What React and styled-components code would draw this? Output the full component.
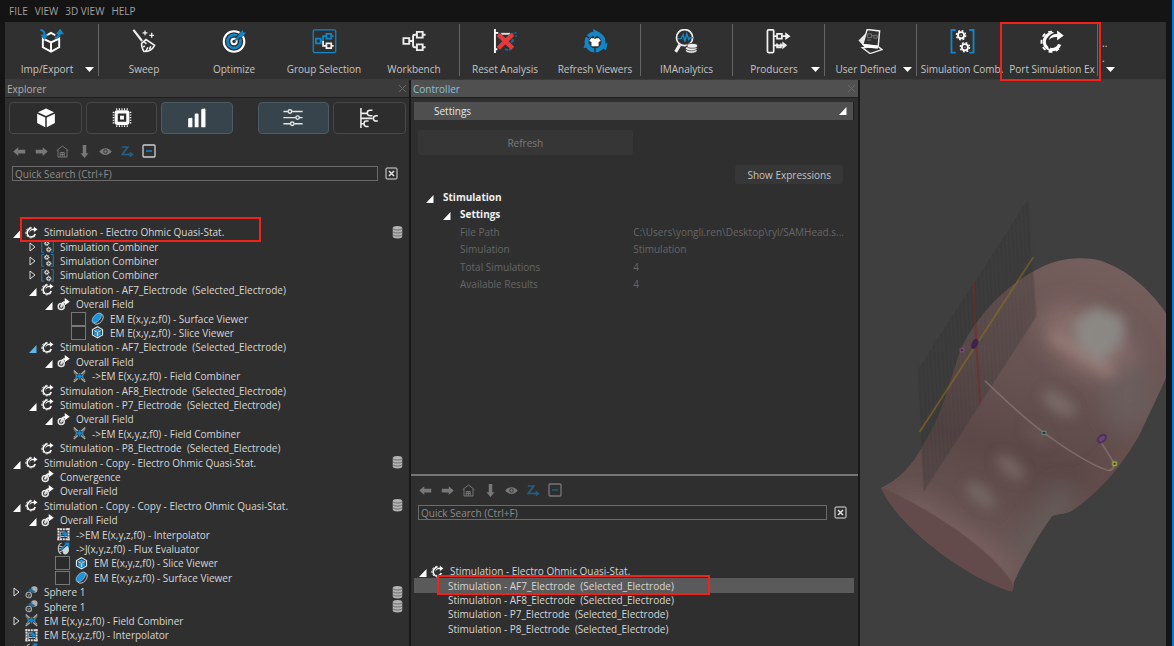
import React, { useState, useCallback } from 'react'
import styled, { createGlobalStyle, css } from 'styled-components'

const BLUE = '#1187c9'

const GlobalStyle = createGlobalStyle`
    * {
        box-sizing: border-box;
    }
    body {
        margin: 0;
        background: #141414;
        color: #d6d6d6;
        font-family: "Open Sans", "Noto Sans", sans-serif;
        font-size: 10px;
        line-height: 14px;
        overflow: hidden;
    }
    button, input {
        font: inherit;
        color: inherit;
    }
    button {
        margin: 0;
        padding: 0;
        border: 0;
        background: none;
        cursor: pointer;
    }
    svg {
        display: block;
        flex: none;
    }
`

const Window = styled.div`
    display: flex;
    flex-direction: column;
    height: 100vh;
    padding: 0 6px 0 5px;
    border-right: 2px solid #0a78d6;
`

const MenuBar = styled.nav`
    display: flex;
    flex: none;
    gap: 7px;
    height: 22px;
    padding: 3px 4px;
    button {
        color: #a0a0a0;
    }
`

const Toolbar = styled.div`
    display: flex;
    flex: none;
    height: 58px;
    background: #303030;
    border-bottom: 1px solid #3a3a3a;
`

const ToolGroup = styled.div`
    display: flex;
    position: relative;
    flex: none;
    padding-right: 1px;
    &::after {
        content: '';
        position: absolute;
        right: 0;
        top: 2px;
        bottom: 3px;
        width: 1px;
        background: #666;
    }
`

const Tool = styled.button`
    display: flex;
    position: relative;
    flex-direction: column;
    align-items: center;
    justify-content: space-between;
    width: ${({ width }) => width || 90}px;
    padding: 7px 4px 3px;
    white-space: nowrap;
    color: #c4c4c4;
`

const ToolLabel = styled.span`
    display: flex;
    align-items: center;
    justify-content: center;
    align-self: stretch;
    span {
        flex: 1;
        text-align: center;
    }
`

const Overflow = styled.button`
    display: flex;
    flex-direction: column;
    align-items: flex-start;
    justify-content: space-between;
    padding: 15px 4px 7px;
    line-height: 12px;
    svg {
        margin-left: 4px;
    }
`

const Marker = styled.span`
    position: absolute;
    z-index: 2;
    border: 2px solid #f1221a;
    pointer-events: none;
    ${({ kind }) => kind === 'tool' && css`
        inset: 0 -4px -2px -7px;
    `}
    ${({ kind }) => kind === 'root' && css`
        inset: -8px auto -3px 7px;
        width: 241px;
    `}
    ${({ kind }) => kind === 'child' && css`
        inset: -3px auto -2px 23px;
        width: 273px;
    `}
`

const Workspace = styled.div`
    display: flex;
    flex: 1;
    min-height: 0;
`

const Panel = styled.section`
    display: flex;
    flex-direction: column;
    flex: ${({ grow }) => grow} 1 0;
    min-width: 0;
    overflow: hidden;
    background: #2f2f2f;
    border-right: 2px solid #191919;
`

const PanelTitle = styled.header`
    display: flex;
    flex: none;
    align-items: center;
    justify-content: space-between;
    height: 18px;
    padding: 0 2px;
    border-bottom: 1px solid #1e1e1e;
    background: ${({ active }) => active ? '#505050' : '#3b3b3b'};
    color: ${({ active }) => active ? '#8cc0d6' : '#b0b0b0'};
    button {
        color: #666;
    }
`

const Tabs = styled.div`
    display: grid;
    flex: none;
    grid-template-columns: 73fr 71fr 71fr 17fr 71fr 73fr;
    gap: 4px;
    padding: 4px 3px 0 4px;
`

const Tab = styled.button`
    display: flex;
    align-items: center;
    justify-content: center;
    height: 32px;
    border: 1px solid ${({ on }) => on ? '#4c5a62' : '#484848'};
    border-radius: 4px;
    background: ${({ on }) => on ? '#38444b' : '#2d2d2d'};
    color: #fff;
    grid-column: ${({ col }) => col};
`

const NavIcons = styled.div`
    display: flex;
    flex: none;
    align-items: center;
    justify-content: space-between;
    width: 143px;
    height: 14px;
    margin: ${({ lower }) => lower ? '7px 8px 0' : '10px 8px 0'};
    color: #787878;
`

const SearchRow = styled.div`
    display: flex;
    flex: none;
    align-items: center;
    gap: 7px;
    margin: 8px 11px 0 7px;
`

const SearchInput = styled.input`
    flex: 1;
    min-width: 0;
    height: 15px;
    padding: 0 2px;
    border: 1px solid #6a6a6a;
    border-radius: 0;
    outline: none;
    background: #2c2c2c;
    &::placeholder {
        color: #8c8c8c;
        opacity: 1;
    }
`

const Tree = styled.ul`
    display: grid;
    flex: none;
    grid-auto-rows: 1fr;
    min-height: ${({ size }) => size}px;
    margin: ${({ lower }) => lower ? '44px 4px 0 3px' : '44px 4px 0 8px'};
    padding: 0;
    list-style: none;
`

const TreeRow = styled.li`
    display: flex;
    position: relative;
    align-items: center;
    min-height: 0;
    padding-left: ${({ indent }) => indent}px;
    padding-right: 1px;
    white-space: pre;
    background: ${({ selected }) => selected ? '#5a5a5a' : 'none'};
`

const Twisty = styled.button`
    display: flex;
    flex: none;
    width: 12px;
    height: 12px;
    align-items: ${({ open }) => open ? 'flex-end' : 'center'};
`

const Slot = styled.span`
    flex: none;
    width: 12px;
`

const Check = styled.input`
    appearance: none;
    flex: none;
    width: 15px;
    height: 14px;
    margin: 0 5px 0 -2px;
    border: 1px solid #777;
    background: #2b2b2b;
    &:checked {
        background: ${BLUE};
    }
`

const RowLabel = styled.span`
    flex: 1;
    padding-left: 6px;
`

const SectionBar = styled.button`
    display: flex;
    flex: none;
    align-items: center;
    justify-content: space-between;
    height: 18px;
    margin: 4px 4px 0 3px;
    padding: 0 6px 0 20px;
    border-right: 1px solid #202020;
    background: #4f4f4f;
    color: #e6e6e6;
`

const RefreshButton = styled.button`
    flex: none;
    width: 48%;
    height: 25px;
    margin: 10px 0 0 7px;
    border-radius: 3px;
    background: #363636;
    color: #7a7a7a;
`

const ExpressionsButton = styled.button`
    flex: none;
    align-self: flex-end;
    height: 19px;
    margin: 10px 15px 0 0;
    padding: 0 12px;
    border-radius: 3px;
    background: #373737;
    color: #c2c2c2;
`

const Properties = styled.table`
    flex: none;
    height: 105px;
    margin: 4px 14px 0;
    border-collapse: collapse;
    table-layout: fixed;
    color: #666;
    th, td {
        padding: 0;
        text-align: left;
        font-weight: 400;
    }
    td {
        width: 208px;
        padding-left: 2px;
        white-space: nowrap;
    }
`

const PropName = styled.div`
    display: flex;
    align-items: center;
    gap: 9px;
    padding-left: ${({ indent }) => indent}px;
    ${({ head }) => head && css`
        color: #f0f0f0;
        font-weight: 700;
    `}
    svg {
        margin-top: 4px;
    }
`

const Lower = styled.div`
    display: flex;
    flex: none;
    flex-direction: column;
    height: 172px;
    margin-top: auto;
    border-top: 2px solid #767676;
`

const Viewport = styled.section`
    display: flex;
    flex: 306 1 0;
    min-width: 0;
    background: #3f3f3f;
    svg {
        width: 100%;
        height: 100%;
    }
`

const Cog = ({ x, y, r = 3.2, color = '#fff' }) => (
    <g stroke={color} fill="none">
        <circle cx={x} cy={y} r={r} strokeWidth="1.9" />
        <circle cx={x} cy={y} r={r + 1.6} strokeWidth="1.5" strokeDasharray="1.9 1.88" />
        <circle cx={x} cy={y} r=".6" fill={color} stroke="none" />
    </g>
)

const icons = {
    port: (
        <g fill="none" stroke="#fff">
            <path d="M13.500 5A8.300 8.300 0 1 0 20 16" strokeWidth="3.400" />
            <path d="M12 2.600A10.600 10.600 0 1 0 21 18" strokeWidth="1.800" strokeDasharray="4 3.600" />
            <path d="M9.500 20.500c-2.500-8 .5-11.500 7-11.500v4.500L25.500 6.800 16.500 0v4.500C10 5 5 10 9.500 20.500z" fill="#fff" stroke="#2f2f2f" strokeWidth="1.600" />
        </g>
    ),
    export: (
        <g fill="none">
            <path d="M12 23.500 3.500 19v-9L12 14l8.500-4v9zM12 14v9.500M7.500 6.500 12 4l4.500 2.500" stroke="#fff" strokeWidth="2" />
            <path d="M1 1c4 .5 4.500 3 4 7M16 9c4 0 5-2 5-6" stroke={BLUE} strokeWidth="2.200" />
            <path d="M1 6h8L5 11.500zM17 5.500l4.500-6L25.500 5.500z" fill={BLUE} />
        </g>
    ),
    sweep: (
        <g fill="none" stroke="#f2f2f2" strokeWidth="1.600">
            <path d="m1 1 9 11.500" strokeWidth="2.200" />
            <path d="m9.500 15 4.500-4 9 6c-2 4-6 6.500-11 6.500-2-3-3-5-2.500-8.500zM12 13l2.500 2.500M14 23l2-4M17.500 21.500l1.500-3.500M13 18l-2 .5" />
            <path d="M13 1.500v5M10.500 4h5M20 4v5M17.500 6.500h5" strokeWidth="1.300" />
        </g>
    ),
    optimize: (
        <g fill="none">
            <circle cx="12" cy="13" r="10.700" stroke="#fff" strokeWidth="2.200" />
            <circle cx="12" cy="13" r="6.800" stroke={BLUE} strokeWidth="2.800" />
            <circle cx="12" cy="13" r="2.800" stroke="#fff" strokeWidth="2" />
            <path d="m15 10 6-6" stroke="#303030" strokeWidth="5" />
            <path d="m13 12 8-8" stroke={BLUE} strokeWidth="2" />
            <path d="m17 5.500 4-4.500.5 2.500 3 .5L20 8.500l-3 .2z" fill={BLUE} />
        </g>
    ),
    group: (
        <g fill="none" strokeWidth="1.800">
            <rect x=".8" y=".8" width="23.400" height="23.800" rx="1.500" stroke={BLUE} strokeWidth="1.300" />
            <path d="M3.500 10h5v5h-5zM14.500 5h5v5h-5zM8.500 12.500H11V7.500h3.500M19.500 7.500H22" stroke={BLUE} />
            <path d="M14.500 15h5v5h-5zM19.500 17.500H22M11 12.500v5h3.500" stroke="#f2f2f2" />
        </g>
    ),
    workbench: (
        <path d="M1 9.500h6v6H1zM15 3h6v6h-6zM15 16h6v6h-6zM7 12.500h4M15 6h-2.500c-1 0-1.500.5-1.500 1.500v10c0 1 .5 1.500 1.500 1.500H15M21 6h3M21 19h3" fill="none" stroke="#ececec" strokeWidth="2" />
    ),
    reset: (
        <g fill="none">
            <path d="M1.500 0v25M1 4h4M1 21h3" stroke="#fff" strokeWidth="2" />
            <path d="M8 5h9" stroke="#ddd" strokeWidth="2" />
            <path d="M19 5h2M22 4h2M23 7l1 1M18 14l3-2M16 21l2 1M19 11l2 1M12 21l3 1" stroke="#17689a" strokeWidth="2" />
            <path d="m5 5.500 15 14.500M20 5.500 5 20" stroke="#e53a3c" strokeWidth="4.600" />
        </g>
    ),
    refresh: (
        <g>
            <circle cx="12" cy="13.500" r="8.800" fill="none" stroke={BLUE} strokeWidth="4.200" />
            <path d="m20 5 4.500 3M2 6.500l4 3M12 20v6" stroke="#303030" strokeWidth="1.500" />
            <path d="m10 0 7 4-6 6zM25 14l-1.500 8-6.500-4zM0 20l2.500-7.500L8 18z" fill={BLUE} />
            <path d="M8 9.500h2.500c1 1 2 1 3 0H16l2 3-2.300 1V18H8.300v-4.500l-2.300-1z" fill="#fff" />
        </g>
    ),
    analytics: (
        <g fill="none" stroke="#eee">
            <circle cx="10.500" cy="9" r="8.400" strokeWidth="1.800" />
            <path d="m5.500 16.500-4.300 7.300" strokeWidth="3.200" />
            <path d="M4 10h3l2-4 1.800 7 2-8 2 6 1.500-2H19" stroke={BLUE} strokeWidth="1.500" />
            <g fill="#eee" stroke="#303030" strokeWidth=".8">
                <ellipse cx="17.500" cy="22.500" rx="6" ry="2.700" />
                <ellipse cx="17.500" cy="20" rx="6" ry="2.700" />
                <ellipse cx="18.500" cy="17.500" rx="5.500" ry="2.500" />
            </g>
        </g>
    ),
    producers: (
        <g fill="none" stroke="#f0f0f0" strokeWidth="1.800">
            <rect x="1" y="1" width="6.500" height="23.500" rx="1" />
            <path d="M7 7.500h4M11 5h5v5h-5zM16 7.500h5M7 17h4M11 15v4h4v-4M11 17h7" />
            <path d="m19.500 3.500 5.500 4-5.500 4zM16.500 13l5 4-5 4z" fill="#f0f0f0" stroke="none" />
        </g>
    ),
    user: (
        <g>
            <path d="M0 12 7 5l6 17-2 2z" fill="#e8e8e8" />
            <path d="m4 19.500 16-1.500 4.500 3.500L12 25.500z" fill="#303030" stroke="#eee" strokeWidth="1.400" />
            <path d="m9 .5 13 1.500-1.500 16L4.500 16z" fill="#303030" stroke="#eee" strokeWidth="1.500" />
            <path d="M9.500 5h4v4h-4zM13.500 7H16M16 6.500h3.500v3H16zM9 11.500h4" fill="none" stroke="#777" />
            <path d="m4.500 15.500 16 2-.5 3L6.500 19z" fill="#fff" />
        </g>
    ),
    combiner: (
        <g fill="none">
            <path d="M5.500 1H1v23.500h4.500M19.500 1H24v23.500h-4.500" stroke={BLUE} strokeWidth="1.900" />
            <Cog x={11} y={6.500} />
            <Cog x={15} y={19} />
        </g>
    ),
    field: (
        <g fill="none" stroke="#e6e6e6">
            <circle cx="8" cy="17" r="6" strokeWidth="3" />
            <circle cx="8" cy="17" r="2.500" fill="#ddd" stroke="none" />
            <path d="M9 17c0-7 3-9 8-9" strokeWidth="3.800" />
            <path d="m15 0 10 7.500-10 7z" fill="#fff" stroke="none" />
        </g>
    ),
    surface: (
        <g>
            <ellipse cx="14" cy="14" rx="12" ry="8" transform="rotate(-48 14 14)" fill="none" stroke="#ccc" strokeWidth="1.800" />
            <ellipse cx="11" cy="12" rx="12" ry="6.500" transform="rotate(-48 11 12)" fill="#1a93da" stroke="#cfe6f4" />
        </g>
    ),
    slice: (
        <g stroke="#d8e6ee" strokeWidth="1.800">
            <path d="m12.500 1.500 10 5.500v11l-10 5.500L2.500 18V7z" fill="#2f2f2f" strokeWidth="2.400" />
            <path d="m12.500 5 7 3.500-7 4-7-4zM6 11l5.500 3v7L6 17.500z" fill="#2a9fe0" stroke="none" />
            <path d="m13.500 14 5.500-3v6.500L13.500 21z" fill="#2a9fe0" stroke="none" />
            <path d="M12.500 13v8M12.500 13 5 9M12.500 13 20 9" fill="none" />
        </g>
    ),
    fieldCombiner: (
        <g fill="none">
            <path d="M1 1l8 7M24 1l-8 7M1 24l8-7M24 24l-8-7" stroke="#aaa" strokeWidth="3" />
            <path d="M1 5c7 3 7 12 0 15M24 5c-7 3-7 12 0 15" stroke="#aaa" strokeWidth="1.800" />
            <path d="M5 12.500h15M12.500 6v13" stroke={BLUE} strokeWidth="3.500" />
            <path d="m8 12.500 4.500-5 4.500 5-4.500 5z" fill={BLUE} />
        </g>
    ),
    interpolator: (
        <g fill="none">
            <path d="M2.500 0v25M22.500 0v25M0 2.500h25M0 22.500h25" stroke="#ddd" strokeWidth="4" strokeDasharray="4 1.500" />
            <path d="M6 20V8h9M6 17h14" stroke="#bbb" strokeWidth="2" />
            <path d="M5 17c3-6 6-7 9-7V5l8 7-8 7v-5c-4 0-6 1-9 3z" fill={BLUE} />
        </g>
    ),
    flux: (
        <g fill="none">
            <path d="M9 2C0 4 0 21 8 24M4 8l7 2M3 14l7-1M5 20l7-4" stroke="#bbb" strokeWidth="2.400" />
            <path d="m11 15 9-8c6 6 4 17-4 18-4 0-6-4-5-10z" fill="#cdd8dd" />
            <path d="m8 15 11-12" stroke={BLUE} strokeWidth="3.500" />
            <path d="M14 1h10v10z" fill={BLUE} />
        </g>
    ),
    sphere: (
        <g>
            <circle cx="18" cy="7" r="6.500" fill="#b0b0b0" />
            <circle cx="7" cy="18" r="5.500" fill="none" stroke="#a8a8a8" strokeWidth="2.400" />
            <path d="M7 18v6M7 18l-5-3M7 18l5-3" stroke="#999" strokeWidth="1.500" />
            <path d="M6 12c0-6 4-8 9-7l-1 3 6 2-4 5-2-3c-3-1-5-1-8 0z" fill="#1c6fa0" />
        </g>
    ),
    db: (
        <g fill="#b4b4b4">
            <path d="M3 4v17c0 2 4 4 9.500 4S22 23 22 21V4z" />
            <ellipse cx="12.500" cy="4" rx="9.500" ry="4" />
            <path d="M3 5.500c3 3.500 16 3.500 19 0M3 11.500c3 3.500 16 3.500 19 0M3 17.500c3 3.500 16 3.500 19 0" fill="none" stroke="#555" strokeWidth="1.500" />
        </g>
    ),
    cube: (
        <g fill="#fff">
            <path d="m12.500.500 10.500 5-10.500 5-10.500-5z" />
            <path d="m1 7.500 10.500 5V25L1 19.500zM24 7.500l-10.500 5V25L24 19.500z" />
        </g>
    ),
    chip: (
        <g fill="none" stroke="#fff">
            <rect x="5" y="5" width="15" height="15" rx="1" strokeWidth="4" />
            <rect x="10" y="10" width="5" height="5" fill="#fff" stroke="none" />
            <path d="M5 1.500h15M5 23.500h15M1.500 5v15M23.500 5v15" strokeWidth="2.200" strokeDasharray="1.400 2" />
        </g>
    ),
    bars: <path d="M1 14.500a1.500 1.500 0 0 1 1.500-1.500h2A1.500 1.500 0 0 1 6.500 14.500V25H1zM9.500 8.500A1.500 1.500 0 0 1 11 7h2a1.500 1.500 0 0 1 1.500 1.500V25h-5zM18 2.500A1.500 1.500 0 0 1 19.500 1h2A1.500 1.500 0 0 1 23.500 2.500V25H18z" fill="#fff" />,
    sliders: (
        <g fill="none" stroke="#e4e4e4" strokeWidth="1.800">
            <path d="M0 4.500h6M11 4.500h14M0 12.500h16M21 12.500h4M0 20.500h9M14 20.500h11" />
            <circle cx="8.500" cy="4.500" r="2.300" />
            <circle cx="18.500" cy="12.500" r="2.300" />
            <circle cx="11.500" cy="20.500" r="2.300" />
        </g>
    ),
    branches: (
        <g fill="none" stroke="#eee" strokeWidth="2">
            <path d="M2 0v26M2 7h8M2 13.500h15M2 20.500h4M17 3h-3c-5 0-5 7 0 7h3M24 10h-2c-5 0-5 7 0 7h2M12 17H9c-4 0-4 7 0 7h3" />
        </g>
    ),
    left: <path d="m0 13 10-8.500v5h14v7.500H10v5z" fill="currentColor" />,
    right: <path d="m25 13-10-8.500v5H1v7.500h14v5z" fill="currentColor" />,
    home: (
        <g fill="none" stroke="currentColor" strokeWidth="1.900">
            <path d="M1 11 12.500 2 24 11M3.500 10v14h18V10M8 24v-9h8v9M12 15v9M8 19h8" />
        </g>
    ),
    down: <path d="m12.500 26-8-9.500h4.500V0h7v16.500h4.500z" fill="currentColor" />,
    eye: (
        <g>
            <path d="M0 13c7-9 18-9 25 0-7 9-18 9-25 0z" fill="currentColor" />
            <circle cx="12.500" cy="13" r="3.600" fill="none" stroke="#2f2f2f" strokeWidth="1.800" />
        </g>
    ),
    zsort: (
        <g fill="none" stroke="#265e80" strokeWidth="3.400">
            <path d="M1 4h12L2 19h13" />
            <path d="M13 19h6" />
            <path d="m17 13 8 6-8 6z" fill="#265e80" stroke="none" />
        </g>
    ),
}

const Icon = ({ name, size = 13 }) => (
    <svg width={size} height={size} viewBox="0 0 25 26" aria-hidden="true">{icons[name]}</svg>
)

const Open = ({ fill = '#fff' }) => <svg width="8" height="8" viewBox="0 0 8 8"><path d="M7.500 0v8H0z" fill={fill} /></svg>
const Closed = () => <svg width="7" height="10" viewBox="0 0 7 10"><path d="M1 1v8l5-4z" fill="none" stroke="#ddd" /></svg>
const Caret = () => <svg width="9" height="5" viewBox="0 0 9 5"><path d="M0 0h9L4.500 5z" fill="#fff" /></svg>

const toolGroups = [
    [{ icon: 'export', label: 'Imp/Export', menu: true, width: 93 }],
    [
        { icon: 'sweep', label: 'Sweep' },
        { icon: 'optimize', label: 'Optimize' },
        { icon: 'group', label: 'Group Selection' },
        { icon: 'workbench', label: 'Workbench' },
    ],
    [{ icon: 'reset', label: 'Reset Analysis' }, { icon: 'refresh', label: 'Refresh Viewers' }],
    [{ icon: 'analytics', label: 'IMAnalytics', width: 91 }],
    [{ icon: 'producers', label: 'Producers', menu: true, width: 91 }],
    [{ icon: 'user', label: 'User Defined', menu: true, width: 91 }],
    [{ icon: 'combiner', label: 'Simulation Comb.' }, { icon: 'port', label: 'Port Simulation Ex', marked: true }],
]

const AF7 = 'Stimulation - AF7_Electrode  (Selected_Electrode)'
const AF8 = 'Stimulation - AF8_Electrode  (Selected_Electrode)'
const P7 = 'Stimulation - P7_Electrode  (Selected_Electrode)'
const P8 = 'Stimulation - P8_Electrode  (Selected_Electrode)'

// level, icon, label, then what the row carries
const explorerRows = [
    { level: 0, icon: 'port', label: 'Stimulation - Electro Ohmic Quasi-Stat.', arrow: 'open', db: true, marker: 'root' },
    { level: 1, icon: 'combiner', label: 'Simulation Combiner', arrow: 'closed' },
    { level: 1, icon: 'combiner', label: 'Simulation Combiner', arrow: 'closed' },
    { level: 1, icon: 'combiner', label: 'Simulation Combiner', arrow: 'closed' },
    { level: 1, icon: 'port', label: AF7, arrow: 'open' },
    { level: 2, icon: 'field', label: 'Overall Field', arrow: 'open' },
    { level: 3, icon: 'surface', label: 'EM E(x,y,z,f0) - Surface Viewer', check: true },
    { level: 3, icon: 'slice', label: 'EM E(x,y,z,f0) - Slice Viewer', check: true },
    { level: 1, icon: 'port', label: AF7, arrow: 'open', hot: true },
    { level: 2, icon: 'field', label: 'Overall Field', arrow: 'open' },
    { level: 3, icon: 'fieldCombiner', label: '->EM E(x,y,z,f0) - Field Combiner' },
    { level: 1, icon: 'port', label: AF8 },
    { level: 1, icon: 'port', label: P7, arrow: 'open' },
    { level: 2, icon: 'field', label: 'Overall Field', arrow: 'open' },
    { level: 3, icon: 'fieldCombiner', label: '->EM E(x,y,z,f0) - Field Combiner' },
    { level: 1, icon: 'port', label: P8 },
    { level: 0, icon: 'port', label: 'Stimulation - Copy - Electro Ohmic Quasi-Stat.', arrow: 'open', db: true },
    { level: 1, icon: 'field', label: 'Convergence' },
    { level: 1, icon: 'field', label: 'Overall Field' },
    { level: 0, icon: 'port', label: 'Stimulation - Copy - Copy - Electro Ohmic Quasi-Stat.', arrow: 'open', db: true },
    { level: 1, icon: 'field', label: 'Overall Field', arrow: 'open' },
    { level: 2, icon: 'interpolator', label: '->EM E(x,y,z,f0) - Interpolator' },
    { level: 2, icon: 'flux', label: '->J(x,y,z,f0) - Flux Evaluator' },
    { level: 2, icon: 'slice', label: 'EM E(x,y,z,f0) - Slice Viewer', check: true },
    { level: 2, icon: 'surface', label: 'EM E(x,y,z,f0) - Surface Viewer', check: true },
    { level: 0, icon: 'sphere', label: 'Sphere 1', arrow: 'closed', db: true },
    { level: 0, icon: 'sphere', label: 'Sphere 1', db: true },
    { level: 0, icon: 'fieldCombiner', label: 'EM E(x,y,z,f0) - Field Combiner', arrow: 'closed' },
    { level: 0, icon: 'interpolator', label: 'EM E(x,y,z,f0) - Interpolator' },
    { level: 0, icon: 'flux', label: 'J(x,y,z,f0) - Flux Evaluator', arrow: 'closed' },
]

const properties = [
    ['File Path', 'C:\\Users\\yongli.ren\\Desktop\\ryl/SAMHead.s...'],
    ['Simulation', 'Stimulation'],
    ['Total Simulations', '4'],
    ['Available Results', '4'],
]

function TreeItem({ item }) {
    const { level, icon, label, arrow, check, db, marker, hot } = item
    return (
        <TreeRow indent={level * 16}>
            {arrow ? (
                <Twisty open={arrow === 'open'} aria-label="Toggle">
                    {arrow === 'open' ? <Open fill={hot ? '#58b8ee' : '#fff'} /> : <Closed />}
                </Twisty>
            ) : <Slot />}
            {check && <Check type="checkbox" aria-label={label} />}
            <Icon name={icon} />
            <RowLabel>{label}</RowLabel>
            {db && <Icon name="db" />}
            {marker && <Marker kind={marker} />}
        </TreeRow>
    )
}

function Navigation({ lower }) {
    return (
        <NavIcons lower={lower}>
            {['left', 'right', 'home', 'down', 'eye', 'zsort'].map(name => (
                <button key={name} aria-label={name}><Icon name={name} /></button>
            ))}
            <button aria-label="Collapse all">
                <svg width="14" height="14" viewBox="0 0 14 14">
                    <rect x="1" y="1" width="12" height="12" rx="1" fill="none" stroke={lower ? '#777' : '#d0d0d0'} strokeWidth="1.300" />
                    <path d="M4 7h6" stroke={lower ? '#24597a' : BLUE} strokeWidth="1.500" />
                </svg>
            </button>
        </NavIcons>
    )
}

function Search() {
    const [value, setValue] = useState('')
    const handleChange = useCallback(e => setValue(e.target.value), [])
    return (
        <SearchRow>
            <SearchInput aria-label="Quick Search" placeholder="Quick Search (Ctrl+F)" value={value} onChange={handleChange} />
            <button aria-label="Clear search" onClick={() => setValue('')}>
                <svg width="13" height="13" viewBox="0 0 13 13" fill="none" stroke="#e0e0e0">
                    <rect x="1" y="1" width="11" height="11" rx="1" />
                    <path d="m4 4 5 5M9 4 4 9" strokeWidth="1.600" />
                </svg>
            </button>
        </SearchRow>
    )
}

const Close = () => (
    <svg width="9" height="9" viewBox="0 0 9 9"><path d="m1 1 7 7M8 1 1 8" stroke="currentColor" /></svg>
)

function Explorer() {
    const [mode, setMode] = useState('bars')
    const tabs = [['cube', 1], ['chip', 2], ['bars', 3], ['sliders', 5], ['branches', 6]]
    return (
        <Panel grow={404}>
            <PanelTitle>Explorer<button aria-label="Close Explorer"><Close /></button></PanelTitle>
            <Tabs>
                {tabs.map(([name, col]) => (
                    <Tab key={name} col={col} on={name === mode || name === 'sliders'} aria-label={name} onClick={() => setMode(name)}>
                        <Icon name={name} size={20} />
                    </Tab>
                ))}
            </Tabs>
            <Navigation />
            <Search />
            <Tree size={432}>
                {explorerRows.map((item, i) => <TreeItem key={i} item={item} />)}
            </Tree>
        </Panel>
    )
}

function Controller() {
    return (
        <Panel grow={447}>
            <PanelTitle active>Controller<button aria-label="Close Controller"><Close /></button></PanelTitle>
            <SectionBar>Settings<Open /></SectionBar>
            <RefreshButton>Refresh</RefreshButton>
            <ExpressionsButton>Show Expressions</ExpressionsButton>
            <Properties>
                <tbody>
                    <tr><th colSpan={2}><PropName head indent={1}><Open />Stimulation</PropName></th></tr>
                    <tr><th colSpan={2}><PropName head indent={18}><Open />Settings</PropName></th></tr>
                    {properties.map(([name, value]) => (
                        <tr key={name}>
                            <th scope="row"><PropName indent={35}>{name}</PropName></th>
                            <td>{value}</td>
                        </tr>
                    ))}
                </tbody>
            </Properties>
            <Lower>
                <Navigation lower />
                <Search />
                <Tree size={72} lower>
                    <TreeRow indent={5}>
                        <Twisty open aria-label="Toggle"><Open /></Twisty>
                        <Icon name="port" />
                        <RowLabel>Stimulation - Electro Ohmic Quasi-Stat.</RowLabel>
                    </TreeRow>
                    {[AF7, AF8, P7, P8].map(label => (
                        <TreeRow key={label} indent={28} selected={label === AF7}>
                            <RowLabel>{label}</RowLabel>
                            {label === AF7 && <Marker kind="child" />}
                        </TreeRow>
                    ))}
                </Tree>
            </Lower>
        </Panel>
    )
}

const HEAD = 'M78 922C130 900 175 850 200 800C270 690 275 620 320 500C370 400 450 320 540 272C600 236 670 228 735 243C810 268 880 325 930 400V592C905 650 880 700 850 765C800 850 740 930 650 990C630 1002 605 1000 590 1006C550 1060 500 1150 475 1205Q474 1228 468 1232C330 1190 130 1040 78 922z'
const PLANE = 'M520 55 542 410 205 935 186 570z'

// upright and slanted lines of the slice plane
const MESH = [
    ...Array.from({ length: 31 }, (_, i) => `M${186 + i * 11.1} ${570 - i * 17.1}l20 361`),
    ...Array.from({ length: 31 }, (_, i) => `M${186 + i * 0.63} ${570 + i * 12.1}l335-519`),
].join('')

function Scene() {
    return (
        <Viewport aria-label="3D view">
            <svg viewBox="15 -300 915 1698" preserveAspectRatio="xMidYMid slice">
                <defs>
                    <linearGradient id="skin" x1="680" y1="230" x2="380" y2="1080" gradientUnits="userSpaceOnUse">
                        <stop offset="0" stopColor="#755f5d" />
                        <stop offset=".45" stopColor="#665251" />
                        <stop offset=".7" stopColor="#5b4847" />
                        <stop offset="1" stopColor="#6a5655" />
                    </linearGradient>
                    <filter id="soft" x="-50%" y="-50%" width="200%" height="200%"><feGaussianBlur stdDeviation="32" /></filter>
                    <filter id="tight" x="-50%" y="-50%" width="200%" height="200%"><feGaussianBlur stdDeviation="17" /></filter>
                    <clipPath id="head"><path d={HEAD} /></clipPath>
                </defs>
                <path d={HEAD} fill="url(#skin)" />
                <g clipPath="url(#head)">
                    <g filter="url(#soft)">
                        <ellipse cx="700" cy="490" rx="160" ry="90" transform="rotate(32 700 490)" fill="#866d6a" />
                        <ellipse cx="820" cy="650" rx="80" ry="100" fill="#6b5d5b" />
                        <path d="M150 960 380 1110 470 1190" stroke="#7d6462" strokeWidth="50" fill="none" />
                        <path d="M500 1130 640 930" stroke="#655b58" strokeWidth="80" fill="none" />
                        <path d="M690 940 850 770" stroke="#705251" strokeWidth="25" fill="none" />
                    </g>
                    <g filter="url(#tight)">
                        <path d="M590 465 770 580" stroke="#967b78" strokeWidth="30" />
                        <path d="M650 430 720 380 805 415 800 485 735 550 670 500z" fill="#8b8884" />
                        <ellipse cx="610" cy="670" rx="58" ry="26" transform="rotate(35 610 670)" fill="#7a6a68" />
                        <ellipse cx="465" cy="860" rx="52" ry="25" transform="rotate(42 465 860)" fill="#756462" />
                        <ellipse cx="375" cy="943" rx="54" ry="24" transform="rotate(42 375 943)" fill="#766664" />
                        <ellipse cx="545" cy="765" rx="45" ry="14" transform="rotate(38 545 765)" fill="#6a5755" />
                    </g>
                    <path d="M78 922C200 970 420 1110 474 1215L470 1236C320 1200 120 1050 78 922z" fill="#634b4b" />
                </g>
                <path d={PLANE} fill="#292929" opacity=".28" />
                <path d={MESH} fill="none" stroke="#8a8a8a" strokeWidth="1" opacity=".22" />
                <g fill="none" strokeWidth="3">
                    <path d="M193 755 533 232" stroke="#917020" />
                    <path d="M355 308 363 500 374 672" stroke="#862222" />
                    <path d="M320 505 358 494 395 505" stroke="#67456f" strokeWidth="2" />
                    <path d="M388 602C450 660 500 710 565 758C630 805 700 850 750 868Q772 876 776 850L738 790" stroke="#91807e" />
                </g>
                <ellipse cx="358" cy="492" rx="7" ry="14" transform="rotate(25 358 492)" fill="#442153" stroke="#351b43" strokeWidth="3" />
                <ellipse cx="738" cy="775" rx="14" ry="9" transform="rotate(-40 738 775)" fill="#67447a" stroke="#43235a" strokeWidth="4" />
                <rect x="315" y="506" width="9" height="9" fill="#1c1420" stroke="#98548f" strokeWidth="3" />
                <rect x="560" y="753" width="10" height="10" fill="#15201f" stroke="#659c98" strokeWidth="3" />
                <rect x="771" y="845" width="10" height="10" fill="#26310f" stroke="#9fbd2c" strokeWidth="4" />
            </svg>
        </Viewport>
    )
}

export default function App() {
    return (
        <>
            <GlobalStyle />
            <Window>
                <MenuBar>
                    {['FILE', 'VIEW', '3D VIEW', 'HELP'].map(name => <button key={name}>{name}</button>)}
                </MenuBar>
                <Toolbar>
                    {toolGroups.map((group, i) => (
                        <ToolGroup key={i}>
                            {group.map(({ icon, label, menu, width, marked }) => (
                                <Tool key={label} width={width}>
                                    <Icon name={icon} size={25} />
                                    <ToolLabel><span>{label}</span>{menu && <Caret />}</ToolLabel>
                                    {marked && <Marker kind="tool" />}
                                </Tool>
                            ))}
                        </ToolGroup>
                    ))}
                    <Overflow aria-label="More tools"><span>..</span><span>.</span><Caret /></Overflow>
                </Toolbar>
                <Workspace>
                    <Explorer />
                    <Controller />
                    <Scene />
                </Workspace>
            </Window>
        </>
    )
}
